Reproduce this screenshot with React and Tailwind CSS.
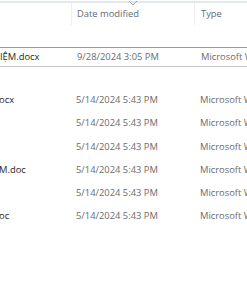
import React from "react";

const rows = [
    { name: "ocx", date: "5/14/2024 5:43 PM" },
    { name: "", date: "5/14/2024 5:43 PM" },
    { name: "", date: "5/14/2024 5:43 PM" },
    { name: "M.doc", date: "5/14/2024 5:43 PM" },
    { name: "", date: "5/14/2024 5:43 PM" },
    { name: "oc", date: "5/14/2024 5:43 PM" },
];

function Row({ name, date, selected }) {
    return (
        <div
            className={`flex items-center h-[20px] ${selected ? "border border-[#9a9a9a] border-b-[#c4c4c4] -mx-[2px] pl-[2px] mt-[1px]" : ""}`}
        >
            <div className="w-[72px] shrink-0 text-[#1f1f1f] -ml-[1px] whitespace-nowrap overflow-hidden">{name}</div>
            <div className="w-[123px] shrink-0 pl-[5px] text-[#6b6b6b] whitespace-nowrap">{date}</div>
            <div className="pl-[6px] text-[#6b6b6b] whitespace-nowrap overflow-hidden">Microsoft Word Document</div>
        </div>
    );
}

export default function App() {
    return (
        <div
            className="w-[247px] h-[296px] bg-white overflow-hidden relative text-[9.4px]"
            style={{ fontFamily: '"Open Sans", "Noto Sans", sans-serif' }}
        >
            {/* header */}
            <div className="h-[2px] mt-[1px] bg-[#e3e9f0]" />
            <div className="flex h-[22px] items-center relative">
                <div className="w-[72px] shrink-0 h-full border-r border-[#eeeeee]" />
                <div className="w-[123px] shrink-0 h-full border-r border-[#eeeeee] pl-[5px] flex items-center text-[#5f6b78]">
                    Date modified
                </div>
                <div className="pl-[6px] text-[#5f6b78]">Type</div>
                <svg className="absolute left-[128px] -top-[3px]" width="10" height="6" viewBox="0 0 10 6">
                    <path d="M1 1 L5 5 L9 1" fill="none" stroke="#9aa3ad" strokeWidth="1" />
                </svg>
            </div>

            <div className="mt-[22px]">
                <Row name="IỆM.docx" date="9/28/2024 3:05 PM" selected />
            </div>

            <div className="mt-[23px] flex flex-col gap-[3.3px]">
                {rows.map((r, i) => (
                    <Row key={i} {...r} />
                ))}
            </div>
        </div>
    );
}
